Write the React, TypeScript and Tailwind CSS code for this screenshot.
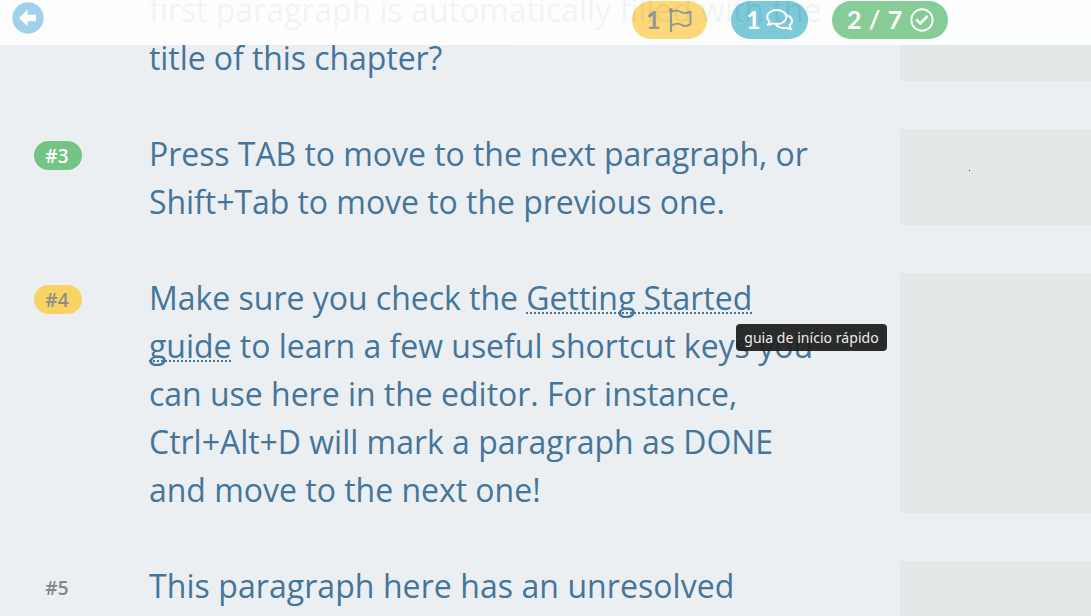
import React from 'react';

type Status = 'done' | 'flagged' | 'none';

interface Paragraph {
  id: number;
  status: Status;
  className: string;
  text: React.ReactNode;
}

const badgeClass: Record<Status, string> = {
  done: 'bg-[#74c486] text-white',
  flagged: 'bg-[#f7d364] text-[#8c8f84]',
  none: 'text-[#858585]',
};

const Term: React.FC<{ children: React.ReactNode }> = ({ children }) => (
  <span className="underline decoration-dotted decoration-2 underline-offset-[2px] [text-decoration-skip-ink:none]">
    {children}
  </span>
);

const paragraphs: Paragraph[] = [
  {
    id: 2,
    status: 'none',
    className: 'tracking-[-0.02px]',
    text: (
      <>
        first paragraph is automatically filled with the
        <br />
        <span className="tracking-[-0.07px]">title of this chapter?</span>
      </>
    ),
  },
  {
    id: 3,
    status: 'done',
    className: 'tracking-[-0.05px]',
    text: (
      <>
        Press TAB to move to the next paragraph, or
        <br />
        Shift+Tab to move to the previous one.
      </>
    ),
  },
  {
    id: 4,
    status: 'flagged',
    className: 'tracking-[-0.02px]',
    text: (
      <>
        Make sure you check the <Term>Getting Started</Term>
        <br />
        <Term>guide</Term> to learn a few useful shortcut keys you
        <br />
        can use here in the editor. For instance,
        <br />
        Ctrl+Alt+D will mark a paragraph as DONE
        <br />
        and move to the next one!
      </>
    ),
  },
  {
    id: 5,
    status: 'none',
    className: 'min-h-24 tracking-[0.07px]',
    text: 'This paragraph here has an unresolved',
  },
];

const BackIcon = () => (
  <svg className="h-8 w-8" viewBox="0 0 32 32">
    <circle cx="16" cy="16" r="15.7" fill="#9bcfea" />
    <path d="M7 16l8.6-8.6v5.4H24v6.4h-8.400v5.400z" fill="#fff" />
  </svg>
);

const FlagIcon = () => (
  <svg className="h-6 w-6" viewBox="0 0 24 24" fill="none" stroke="currentColor" strokeWidth="1.9" strokeLinejoin="round">
    <circle cx="2" cy="1.9" r="1.9" fill="currentColor" stroke="none" />
    <path d="M2 1v23" strokeWidth="2.2" />
    <path d="M2 4.2c5-3 8-1.500 10.500 0s5.500 1.200 9-.6v12.800c-3.500 2-6.500 2-9 .5s-6.500-2-10.500 1.100" />
  </svg>
);

const CommentsIcon = () => (
  <svg className="h-6 w-7" viewBox="0 0 28 24" fill="none" stroke="currentColor" strokeWidth="2" strokeLinejoin="round">
    <path d="M11.800 2C6.500 2 2.200 5.100 2.200 9c0 1.900.9 3.400 2.300 4.600-.2 1.200-.8 2.300-1.800 3.200 1.900 0 3.500-.5 4.700-1.400 1.300.4 2.800.6 4.400.6 5.300 0 9.600-3.100 9.600-7S17.100 2 11.800 2z" />
    <path d="M21.200 7c3.400 1 5.800 3.300 5.800 6.100 0 1.900-1 3.400-2.500 4.600.2 1.400.8 2.600 2 3.600-2.100 0-3.800-.6-5.200-1.600-4.600 1-9.200-.7-10.700-3.700" />
  </svg>
);

const CheckIcon = () => (
  <svg className="h-6 w-6" viewBox="0 0 24 24" fill="none" stroke="currentColor">
    <circle cx="12" cy="12" r="10.7" strokeWidth="1.9" />
    <path d="M6.200 11.400l4 4 7.400-7.400" strokeWidth="2.600" />
  </svg>
);

const pillClass = "flex h-[38px] items-center rounded-full pb-px font-['Lato',sans-serif] text-[25px] font-bold leading-none";

export default function App() {
  return (
    <div className="relative h-[616px] w-[1091px] overflow-hidden bg-[#ebeff2]">
      {/* Paragraph list, scrolled under the header */}
      <main className="-mt-[15px] flex flex-col gap-12 font-['Open_Sans',sans-serif]">
        {paragraphs.map((p) => (
          <section key={p.id} className="grid grid-cols-[149px_751px_191px]">
            <div className="pt-3 pl-[34px]">
              {p.id > 2 && (
                <span
                  className={`flex h-[29px] w-12 items-center justify-center rounded-full pt-px pr-0.5 text-[19px] font-semibold leading-none tracking-[0.2px] ${badgeClass[p.status]}`}
                >
                  #{p.id}
                </span>
              )}
            </div>
            <p className={`-mb-px whitespace-nowrap pt-px text-[32px] leading-[48px] text-[#45759a] ${p.className}`}>
              {p.text}
            </p>
            <div className="bg-[#e4e8e9]">
              {p.id === 3 && <div className="mt-[41px] ml-[69px] h-px w-px bg-[#333]" />}
            </div>
          </section>
        ))}
      </main>

      {/* Translucent header bar */}
      <header className="absolute inset-x-0 top-0 flex h-[45px] items-start bg-white opacity-[0.92]">
        <div className="mt-0.5 ml-3 w-[620px]">
          <BackIcon />
        </div>
        <div className="mt-px flex">
          <div className={`${pillClass} w-[75px] gap-2 bg-[#ffd66e] pl-[14px] text-[#87938f]`}>
            <span className="w-[15px]">1</span>
            <FlagIcon />
          </div>
          <div className={`${pillClass} ml-6 w-[77px] gap-[5px] bg-[#74c6d5] pl-[15px] text-white`}>
            <span className="w-[14px]">1</span>
            <CommentsIcon />
          </div>
          <div className={`${pillClass} ml-6 w-[116px] bg-[#7fca90] pl-[15px] text-white`}>
            <span className="w-[63px] whitespace-nowrap tracking-[0.6px]">2 / 7</span>
            <CheckIcon />
          </div>
        </div>
      </header>

      {/* Translation tooltip */}
      <div className="absolute top-[324px] left-[736px] flex h-[27px] w-[151px] items-center justify-center whitespace-nowrap rounded-[4px] bg-[#202020]/95 font-['Noto_Sans',sans-serif] text-[14px] tracking-[0.05px] text-[#ededed]">
        guia de início rápido
      </div>
    </div>
  );
}
